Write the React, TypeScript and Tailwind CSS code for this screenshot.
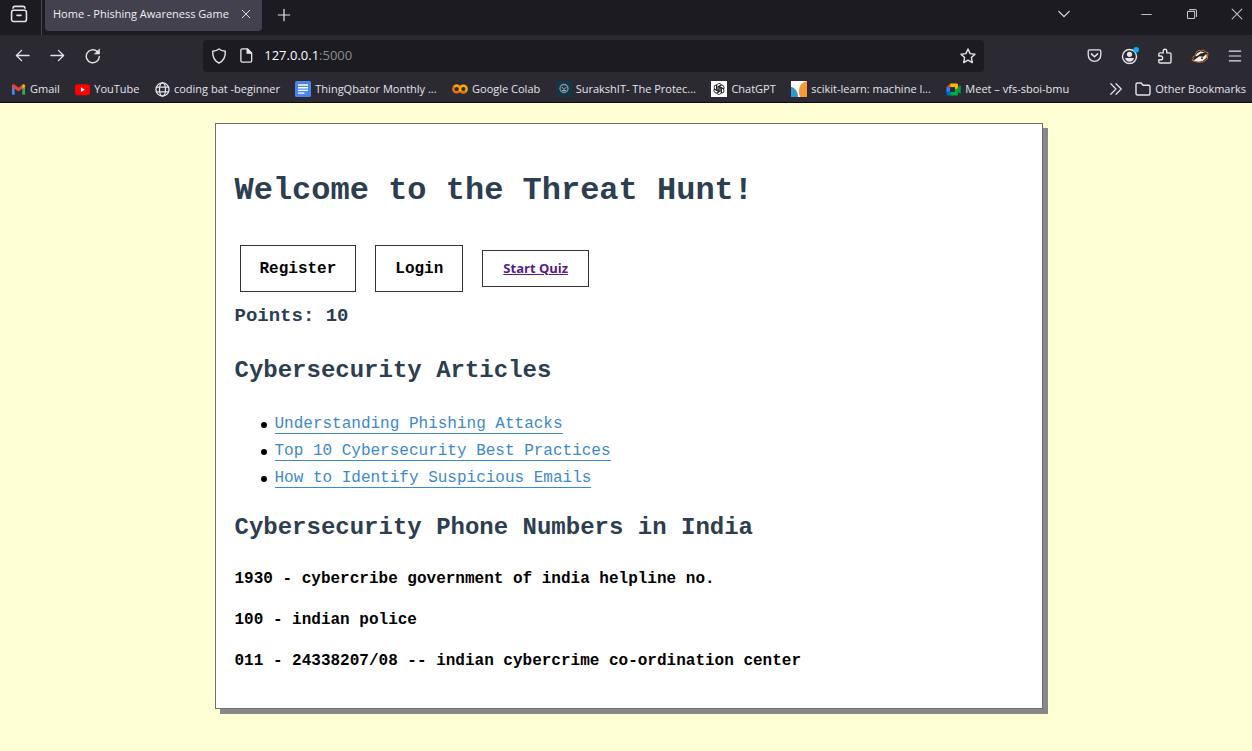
import type { ReactNode } from "react";

type SvgProps = { children: ReactNode; className?: string; box?: string };

function Line({ children, className = "size-4", box = "0 0 16 16" }: SvgProps) {
  return (
    <svg
      viewBox={box}
      className={className}
      fill="none"
      stroke="currentColor"
      strokeWidth="1.4"
      strokeLinecap="round"
      strokeLinejoin="round"
      aria-hidden="true"
    >
      {children}
    </svg>
  );
}

function ToolButton({ label, children }: { label: string; children: ReactNode }) {
  return (
    <button type="button" aria-label={label} className="flex h-8 w-[35px] shrink-0 items-center justify-center rounded hover:bg-white/10">
      {children}
    </button>
  );
}

function TabStrip() {
  return (
    <div className="flex h-[35px] items-start bg-[#1c1b22]">
      <button type="button" aria-label="Firefox View" className="flex h-[28px] w-[38px] items-center justify-center">
        <Line className="size-[18px]">
          <rect x="1.4" y="4.6" width="13.2" height="10" rx="1.8" />
          <path d="M2.6 2.8C2.8 1.6 3.4 1.2 4.4 1.2h7.2c1 0 1.6.4 1.8 1.6M6.2 9.2h3.6" />
        </Line>
      </button>
      <div className="ml-[3px] h-[35px] w-px bg-[#4a4953]" />
      <div className="ml-[3px] flex h-[31px] w-[217px] items-center justify-between rounded-b bg-[#42414d] pr-2 pb-[3px] pl-2 text-[#f0f0f4]">
        <span className="whitespace-nowrap">Home - Phishing Awareness Game</span>
        <button type="button" aria-label="Close tab" className="flex size-4 shrink-0 items-center justify-center">
          <Line className="size-[10px]">
            <path d="M2 2l12 12M14 2L2 14" />
          </Line>
        </button>
      </div>
      <button type="button" aria-label="New tab" className="flex h-[30px] w-11 items-center justify-center">
        <Line className="size-[14px]">
          <path d="M8 1.5v13M1.5 8h13" />
        </Line>
      </button>
      <div className="flex-1" />
      <button type="button" aria-label="List all tabs" className="mr-[39px] flex h-[28px] w-[42px] items-center justify-center">
        <Line className="size-[14px]">
          <path d="M2 5l6 6 6-6" />
        </Line>
      </button>
      <div className="-mr-[7px] flex text-[#c4c4ca]">
        <button type="button" aria-label="Minimize" className="flex h-[28px] w-[45px] items-center justify-center">
          <Line className="size-[11px]">
            <path d="M1 8h14" />
          </Line>
        </button>
        <button type="button" aria-label="Restore" className="flex h-[28px] w-[45px] items-center justify-center">
          <Line className="size-3">
            <rect x="2" y="4.5" width="9.5" height="9.5" rx="1" />
            <path d="M4.8 2h7.2c1.400 0 2 .7 2 2v7.400" />
          </Line>
        </button>
        <button type="button" aria-label="Close window" className="flex h-[28px] w-[45px] items-center justify-center">
          <Line className="size-3">
            <path d="M1.500 1.500l13 13M14.500 1.500l-13 13" />
          </Line>
        </button>
      </div>
    </div>
  );
}

function Toolbar() {
  return (
    <div className="flex h-[41px] items-center bg-[#2b2a33] pl-[5px]">
      <ToolButton label="Back">
        <Line className="size-[15px]">
          <path d="M15 8H1.500M7 2.500L1.500 8 7 13.500" />
        </Line>
      </ToolButton>
      <ToolButton label="Forward">
        <Line className="size-[15px]">
          <path d="M1 8h13.500M9 2.500L14.500 8 9 13.500" />
        </Line>
      </ToolButton>
      <ToolButton label="Reload">
        <Line>
          <path d="M14.300 8.500a6.500 6.500 0 1 1-2.200-5.100l1.500 1.500" />
          <path d="M14.500 1.200v4.800H9.700z" fill="currentColor" strokeWidth="0.6" />
        </Line>
      </ToolButton>
      <div className="flex-[5]" />
      <div className="flex h-8 flex-[41] items-center rounded bg-[#1c1b22] px-2">
        <Line>
          <path d="M8 1C6.300 2.400 4.200 3 1.700 3.200c-.3 5.500 1.700 9.600 6.300 11.800 4.600-2.200 6.600-6.300 6.300-11.800C11.800 3 9.700 2.400 8 1z" />
        </Line>
        <Line className="ml-3 size-[15px]">
          <path d="M3.500 1h5.700L13.500 5.300v8.200c0 .9-.6 1.500-1.500 1.500H3.500c-.9 0-1.500-.6-1.500-1.500v-11C2 1.600 2.600 1 3.500 1z" />
          <path d="M8.700 1.200v4.300h4.500z" fill="currentColor" />
        </Line>
        <div className="relative ml-[10px] flex-1 text-[13px]">
          <input
            aria-label="Address"
            defaultValue="127.0.0.1:5000"
            className="peer w-full bg-transparent text-transparent outline-none focus:text-[#fbfbfe]"
          />
          <div aria-hidden="true" className="pointer-events-none absolute inset-0 text-[#fbfbfe] peer-focus:hidden">
            127.0.0.1<span className="text-[#8b8b92]">:5000</span>
          </div>
        </div>
        <button type="button" aria-label="Bookmark this page">
          <Line>
            <path d="M8 1l2.100 4.600 4.900.6-3.600 3.400.9 5L8 12.100l-4.300 2.500.9-5L1 6.200l4.900-.6z" />
          </Line>
        </button>
      </div>
      <div className="flex-[5]" />
      <ToolButton label="Save to Pocket">
        <Line className="size-[15px]">
          <path d="M2.700 2h10.600c.8 0 1.400.6 1.400 1.400v4.100a6.700 6.700 0 0 1-13.400 0V3.400C1.300 2.600 1.900 2 2.700 2z" />
          <path d="M4.700 6.300L8 9.400l3.300-3.100" strokeWidth="1.600" />
        </Line>
      </ToolButton>
      <ToolButton label="Account">
        <svg viewBox="0 0 18 18" className="size-[18px]" aria-hidden="true">
          <circle cx="8.500" cy="9.500" r="7" fill="none" stroke="#e4e4ea" strokeWidth="1.400" />
          <circle cx="8.500" cy="7.300" r="2.600" fill="#e4e4ea" />
          <path d="M4 11h9c-.5 2.300-2.200 3.700-4.500 3.700S4.500 13.300 4 11z" fill="#e4e4ea" />
          <circle cx="15.200" cy="2.800" r="2.800" fill="#00b3f4" />
        </svg>
      </ToolButton>
      <ToolButton label="Extensions">
        <Line>
          <path d="M1.800 8V6.200c0-.8.500-1.300 1.300-1.300h3.100V3a1.800 1.800 0 0 1 3.600 0v1.900h2.900c.8 0 1.300.5 1.300 1.300v7.500c0 .8-.5 1.300-1.300 1.300H3.100c-.8 0-1.300-.5-1.300-1.300v-1.900h1.900a1.900 1.900 0 0 0 0-3.800z" />
        </Line>
      </ToolButton>
      <ToolButton label="Privacy Badger">
        <svg viewBox="0 0 18 14" className="h-[14px] w-[18px]" aria-hidden="true">
          <path d="M1 11.500l1.500-2L1.800 8.200 4.500 6.500 5 3.500 8 1.200l2 1 2.500-1.300 1.300 1.800 3.200.8-.3 3.500-.4 3-3.800 2.800-5 .5-4-1z" fill="#2b2320" stroke="#b9763f" strokeWidth="1" />
          <path d="M2.500 11.500L5 9.800l3.500-2.600 3.800.6 3.200-3 .2 3.600-3.700 3.300-4.500 1z" fill="#f4efe8" />
          <path d="M4.500 7.200l1.700-3L9.500 2.500l4.500 1L9.500 4.600 6.200 7z" fill="#f4efe8" />
          <circle cx="11" cy="9.200" r="0.900" fill="#17141a" />
        </svg>
      </ToolButton>
      <ToolButton label="Menu">
        <Line className="size-[14px]">
          <path d="M1.500 2.500h13M1.500 8h13M1.500 13.500h13" />
        </Line>
      </ToolButton>
    </div>
  );
}

function Bookmark({ label, icon }: { label: string; icon: ReactNode }) {
  return (
    <a href="#" className="flex shrink-0 items-center gap-1 whitespace-nowrap">
      {icon}
      {label}
    </a>
  );
}

const gmail = (
  <svg viewBox="0 0 16 16" className="size-[15px]" aria-hidden="true">
    <path d="M1 4v9.500h3V7z" fill="#4285f4" />
    <path d="M15 4v9.500h-3V7z" fill="#34a853" />
    <path d="M1 4.200C1 2.500 2.700 2 4 3l4 3.200L12 3v4L8 10.200 1 5z" fill="#ea4335" />
    <path d="M12 3c1.300-1 3-.5 3 1.200V5l-3 2.300z" fill="#fbbc04" />
  </svg>
);

const youtube = (
  <svg viewBox="0 0 16 16" className="size-[15px]" aria-hidden="true">
    <rect x="0" y="2.500" width="16" height="11.500" rx="3" fill="#f00" />
    <path d="M6.300 5.700v5l4.200-2.500z" fill="#fff" />
  </svg>
);

const globe = (
  <Line className="size-[15px]">
    <circle cx="8" cy="8" r="7" />
    <ellipse cx="8" cy="8" rx="3.200" ry="7" />
    <path d="M1.500 5.500h13M1.500 10.500h13" />
  </Line>
);

const docs = (
  <svg viewBox="0 0 16 16" className="size-4" aria-hidden="true">
    <rect width="16" height="16" rx="1.500" fill="#4a86e8" />
    <path d="M3 4h10M3 6.700h10M3 9.400h10M3 12.100h6.500" stroke="#fff" strokeWidth="1.400" />
  </svg>
);

const colab = (
  <svg viewBox="0 0 16 16" className="size-4" fill="none" strokeWidth="2.400" aria-hidden="true">
    <circle cx="4.600" cy="8" r="3.300" stroke="#e8710a" />
    <circle cx="11.400" cy="8" r="3.300" stroke="#f9ab00" />
    <path d="M2.300 5.700a3.300 3.300 0 0 1 4.600 0" stroke="#f9ab00" />
    <path d="M9.100 10.300a3.300 3.300 0 0 0 4.600 0" stroke="#e8710a" />
  </svg>
);

const suraksh = (
  <svg viewBox="0 0 16 16" className="size-4" aria-hidden="true">
    <rect width="16" height="16" fill="#173447" />
    <circle cx="8" cy="7.500" r="4" fill="none" stroke="#7d97a3" strokeWidth="1.400" />
    <path d="M6 6l2 2.500L10.500 6M6 9.500h4" fill="none" stroke="#9fb2bc" />
  </svg>
);

const chatgpt = (
  <svg viewBox="0 0 16 16" className="size-4" aria-hidden="true">
    <rect width="16" height="16" fill="#fff" />
    <g fill="none" stroke="#222" strokeWidth="0.900">
      {[0, 60, 120, 180, 240, 300].map((angle) => (
        <path key={angle} transform={`rotate(${angle} 8 8)`} d="M5.600 9.300V5.100a2.500 2.500 0 0 1 4.600-1.400M7 8.600V5.800l3.500-2" />
      ))}
    </g>
  </svg>
);

const scikit = (
  <svg viewBox="0 0 16 16" className="size-4" aria-hidden="true">
    <rect width="16" height="16" fill="#fff" />
    <path d="M0 6c4 .5 7 4.500 7 10H0z" fill="#3499cd" />
    <path d="M16 0v16H9C6 9 9 1 16 0z" fill="#f89939" />
  </svg>
);

const meet = (
  <svg viewBox="0 0 16 16" className="size-[15px]" aria-hidden="true">
    <path d="M.5 5.500h4v5h-4z" fill="#2684fc" />
    <path d="M.5 5.500l4-4v4z" fill="#ea4335" />
    <path d="M4.500 1.500h7c.8 0 1.200.4 1.200 1.200V7L9.500 8V5.500h-5z" fill="#ffba00" />
    <path d="M.5 10.500h4v4H1.700c-.8 0-1.200-.4-1.200-1.200z" fill="#0066da" />
    <path d="M4.500 10.500h5V8l3.200-1v6.300c0 .8-.4 1.200-1.200 1.200h-7z" fill="#00ac47" />
    <path d="M12.700 5.500l2.300-2c.3-.2.700 0 .7.400v8.200c0 .4-.4.600-.7.400l-2.300-2z" fill="#00a040" />
    <rect x="4.500" y="5.500" width="5" height="5" fill="#2b2a33" />
  </svg>
);

const bookmarks = [
  { label: "Gmail", icon: gmail },
  { label: "YouTube", icon: youtube },
  { label: "coding bat -beginner", icon: globe },
  { label: "ThingQbator Monthly ...", icon: docs },
  { label: "Google Colab", icon: colab },
  { label: "SurakshIT- The Protec...", icon: suraksh },
  { label: "ChatGPT", icon: chatgpt },
  { label: "scikit-learn: machine l...", icon: scikit },
  { label: "Meet – vfs-sboi-bmu", icon: meet },
];

function BookmarksBar() {
  return (
    <nav aria-label="Bookmarks" className="flex h-[27px] items-center border-b border-[#0c0c0d] bg-[#2b2a33] pr-[6px] pl-[11px]">
      <div className="flex flex-1 items-center justify-between">
        {bookmarks.map((b) => (
          <Bookmark key={b.label} {...b} />
        ))}
      </div>
      <button type="button" aria-label="Show more bookmarks" className="mr-[10px] flex w-[56px] justify-end pr-[2px]">
        <Line className="size-[14px]">
          <path d="M2 2l6 6-6 6M8 2l6 6-6 6" />
        </Line>
      </button>
      <Bookmark
        label="Other Bookmarks"
        icon={
          <Line>
            <path d="M2.500 2h3.700l1.800 2.200h5.500c.9 0 1.500.6 1.500 1.500v6.800c0 .9-.6 1.500-1.500 1.500h-11C1.600 14 1 13.400 1 12.500v-9C1 2.600 1.600 2 2.500 2z" />
          </Line>
        }
      />
    </nav>
  );
}

const articles = ["Understanding Phishing Attacks", "Top 10 Cybersecurity Best Practices", "How to Identify Suspicious Emails"];

const phoneNumbers = [
  "1930 - cybercribe government of india helpline no.",
  "100 - indian police",
  "011 - 24338207/08 -- indian cybercrime co-ordination center",
];

export default function App() {
  return (
    <div className="flex min-h-screen flex-col bg-[#feffd5]">
      <header className="font-['Open_Sans','Noto_Sans',sans-serif] text-[11px] text-[#e4e4ea]">
        <TabStrip />
        <Toolbar />
        <BookmarksBar />
      </header>
      <div className="flex-1 py-5 pl-[5px] font-['Courier_New','Liberation_Mono',monospace] text-base text-black">
        <main className="mx-auto max-w-[828px] border border-[#6f6f6f] bg-white px-[19px] pt-[47px] pb-[35px] shadow-[5px_5px_0_#888]">
          <h1 className="text-[32px] leading-10 font-bold text-[#2c3e50]">Welcome to the Threat Hunt!</h1>
          <div className="mt-[34px] ml-[5px] flex items-center">
            <button type="button" className="h-[47px] border border-[#333] px-[19px] font-bold">
              Register
            </button>
            <button type="button" className="ml-[19px] h-[47px] border border-[#333] px-[19px] font-bold">
              Login
            </button>
            <div className="ml-[19px] flex h-[37px] items-center border border-[#333] px-5 font-['Open_Sans','Noto_Sans',sans-serif] text-[13px] font-bold">
              <a href="#" className="text-[#551a8b] underline">
                Start Quiz
              </a>
            </div>
          </div>
          <h3 className="mt-3 text-[19px] leading-6 font-bold text-[#2c3e50]">Points: 10</h3>
          <h2 className="mt-[27px] text-2xl leading-8 font-bold text-[#2c3e50]">Cybersecurity Articles</h2>
          <ul className="mt-6 pl-[26px]">
            {articles.map((title) => (
              <li key={title} className="flex h-[27px] items-center gap-2 before:size-[6px] before:rounded-full before:bg-black">
                <a href="#" className="border-b border-[#3e87cb] leading-[18px] text-[#3e87cb]">
                  {title}
                </a>
              </li>
            ))}
          </ul>
          <h2 className="mt-5 text-2xl leading-8 font-bold text-[#2c3e50]">Cybersecurity Phone Numbers in India</h2>
          <div className="mt-[23px] flex flex-col gap-[17px] font-bold">
            {phoneNumbers.map((line) => (
              <p key={line}>{line}</p>
            ))}
          </div>
        </main>
      </div>
    </div>
  );
}
